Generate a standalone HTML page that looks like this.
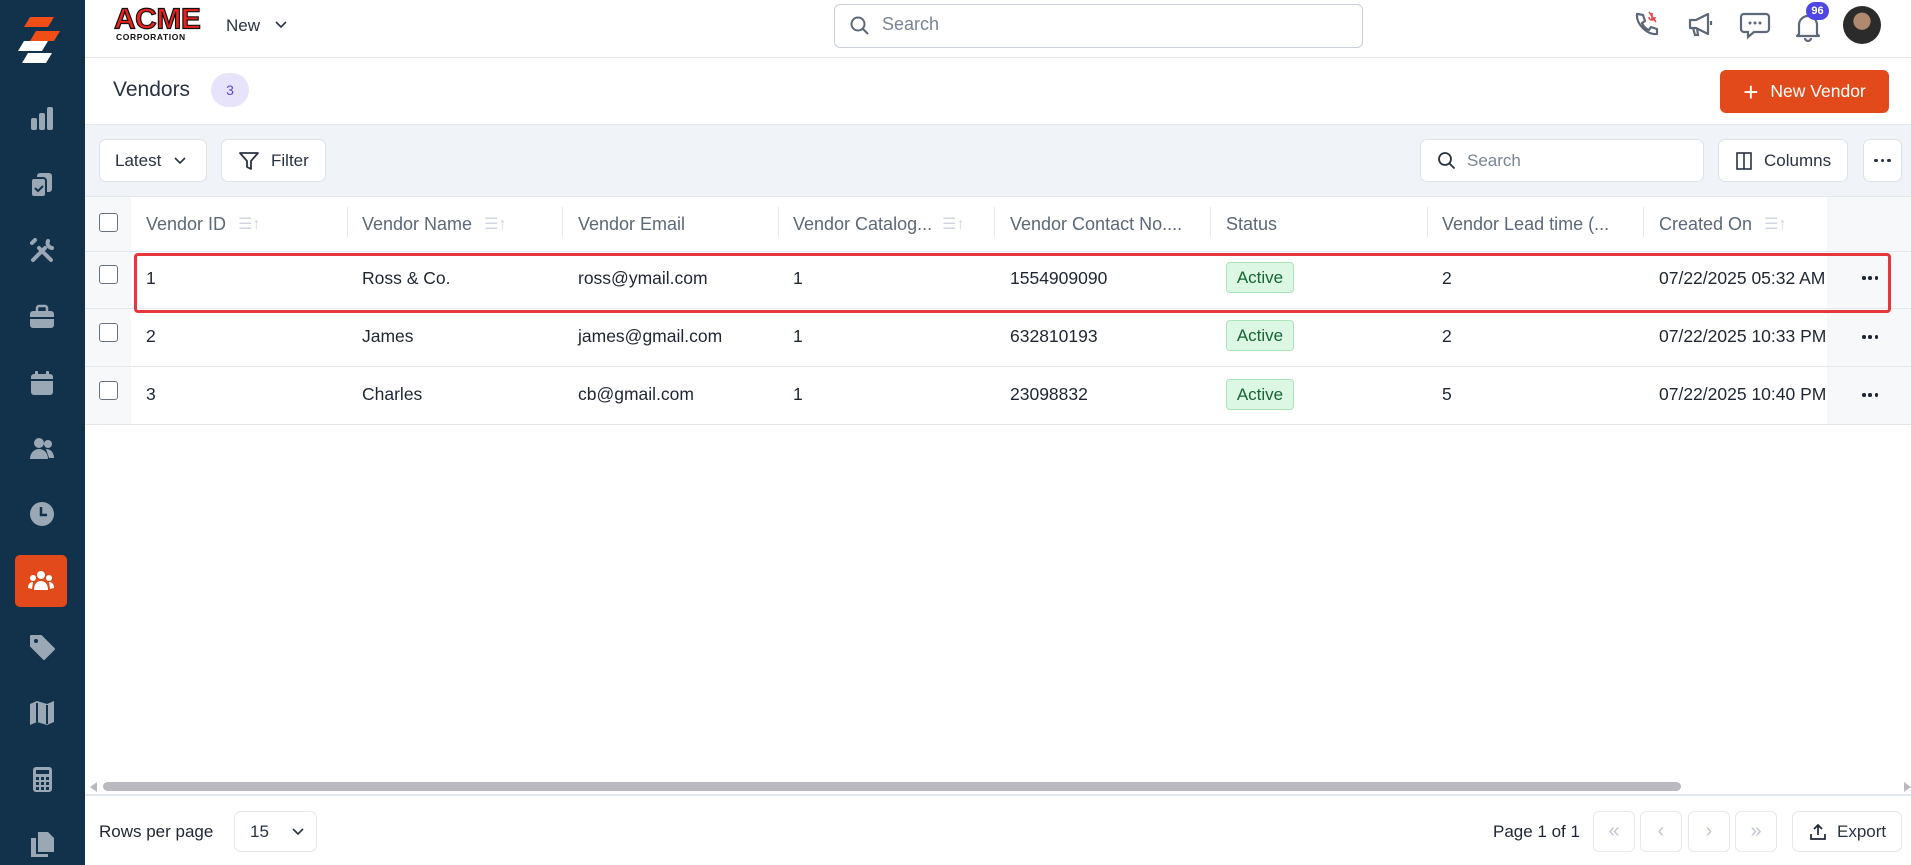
<!DOCTYPE html>
<html><head><meta charset="utf-8"><style>
*{box-sizing:border-box;margin:0;padding:0}
body{width:1911px;height:865px;overflow:hidden;font-family:"Liberation Sans",sans-serif;background:#fff;position:relative;color:#1f2633}
.abs{position:absolute}
.side{left:0;top:0;width:85px;height:865px;background:#12324b}
.si{position:absolute;left:28px;width:28px;height:28px}
.btn{position:absolute;background:#fff;border:1px solid #dde2ea;border-radius:7px;display:flex;align-items:center;font-size:17px;color:#2a3342}
.hd{position:absolute;top:197px;height:54px;display:flex;align-items:center;font-size:18px;color:#5d6878;white-space:nowrap}
.cell{position:absolute;font-size:17.5px;color:#1f2633;white-space:nowrap}
.cb{position:absolute;left:99px;width:19px;height:19px;border:1.5px solid #6b7280;border-radius:3px;background:#fff}
.act{position:absolute;left:1226px;width:68px;height:31px;background:#dcf7e3;border:1px solid #a9e3b8;border-radius:4px;color:#166534;font-size:17px;display:flex;align-items:center;justify-content:center}
.dots{position:absolute;left:1862px;width:16px;height:4px;display:flex;justify-content:space-between}
.dots i{width:3.5px;height:3.5px;border-radius:50%;background:#1f2633;display:block}
.pg{position:absolute;top:811px;width:42px;height:41px;border:1px solid #e6e9ef;border-radius:6px;color:#c0c7d2;display:flex;align-items:center;justify-content:center;font-size:20px}
</style></head><body>
<div class="abs side"></div>
<svg class="abs" style="left:16px;top:15px" width="50" height="50" viewBox="0 0 50 50"><polygon points="14,2 38,2 32,12 8,12" fill="#f04e16"/><polygon points="20,16 44,16 38,26 14,26" fill="#f04e16"/><polygon points="8,26 32,26 26,36 2,36" fill="#fff"/><polygon points="12,38 36,38 30,48 6,48" fill="#fff"/></svg>
<svg class="si" style="top:104px" viewBox="0 0 28 28" fill="#9aa8b5"><rect x="3" y="14" width="6" height="12" rx="2"/><rect x="11" y="9" width="6" height="17" rx="2"/><rect x="19" y="3" width="6" height="23" rx="2"/></svg>
<svg class="si" style="top:171px" viewBox="0 0 28 28" fill="#9aa8b5"><rect x="9" y="2" width="15" height="19" rx="3"/><rect x="3" y="7" width="15" height="19" rx="3" stroke="#12324b" stroke-width="2"/><path d="M7 17l3 3 5-5" stroke="#12324b" stroke-width="2" fill="none"/></svg>
<svg class="si" style="top:237px" viewBox="0 0 28 28" stroke="#9aa8b5" stroke-width="4" stroke-linecap="round"><path d="M5 23L17 11M11 11L23 23M20 4a5 5 0 0 0 4 7M4 6l3-3"/></svg>
<svg class="si" style="top:303px" viewBox="0 0 28 28" fill="#9aa8b5"><rect x="2" y="8" width="24" height="17" rx="3"/><rect x="9" y="3" width="10" height="7" rx="2" fill="none" stroke="#9aa8b5" stroke-width="2.5"/><rect x="2" y="14" width="24" height="2" fill="#12324b"/></svg>
<svg class="si" style="top:369px" viewBox="0 0 28 28" fill="#9aa8b5"><rect x="3" y="5" width="22" height="21" rx="3"/><rect x="7" y="2" width="3" height="6" rx="1"/><rect x="18" y="2" width="3" height="6" rx="1"/><rect x="3" y="10" width="22" height="2" fill="#12324b"/></svg>
<svg class="si" style="top:435px" viewBox="0 0 28 28" fill="#9aa8b5"><circle cx="11" cy="8" r="5"/><path d="M2 24c0-6 4-10 9-10s9 4 9 10z"/><circle cx="20" cy="9" r="4"/><path d="M18 14c5 0 8 4 8 9h-5z"/></svg>
<svg class="si" style="top:500px" viewBox="0 0 28 28"><circle cx="14" cy="14" r="12" fill="#9aa8b5"/><path d="M13 7v8h6" stroke="#12324b" stroke-width="2.5" fill="none"/></svg>
<div class="abs" style="left:15px;top:555px;width:52px;height:52px;background:#e34a1b;border-radius:5px"></div>
<svg class="si" style="top:568px;left:27px" viewBox="0 0 28 28" fill="#fff"><circle cx="14" cy="7" r="4"/><circle cx="6" cy="10" r="3"/><circle cx="22" cy="10" r="3"/><path d="M7 22c0-6 3-9 7-9s7 3 7 9z"/><path d="M1 20c0-4 2-6 5-6l-1 7z M27 20c0-4-2-6-5-6l1 7z"/></svg>
<svg class="si" style="top:633px" viewBox="0 0 28 28" fill="#9aa8b5"><path d="M3 3h10l13 13-10 10L3 13z" stroke="#9aa8b5" stroke-linejoin="round" stroke-width="2"/><circle cx="8" cy="8" r="2" fill="#12324b"/></svg>
<svg class="si" style="top:699px" viewBox="0 0 28 28" fill="#9aa8b5"><path d="M2 5l7-3 10 3 7-3v21l-7 3-10-3-7 3z"/><path d="M9 4v19M19 6v19" stroke="#12324b" stroke-width="2"/></svg>
<svg class="si" style="top:765px" viewBox="0 0 28 28" fill="#9aa8b5"><rect x="5" y="2" width="19" height="25" rx="3"/><rect x="8" y="5" width="13" height="4" fill="#12324b"/><g fill="#12324b"><rect x="8" y="12" width="3" height="3"/><rect x="13" y="12" width="3" height="3"/><rect x="18" y="12" width="3" height="3"/><rect x="8" y="17" width="3" height="3"/><rect x="13" y="17" width="3" height="3"/><rect x="18" y="17" width="3" height="3"/><rect x="8" y="22" width="3" height="3"/><rect x="13" y="22" width="3" height="3"/><rect x="18" y="22" width="3" height="3"/></g></svg>
<svg class="si" style="top:830px" viewBox="0 0 28 28" fill="#9aa8b5"><path d="M10 2h10l6 6v14H10z"/><path d="M3 8h5v16h12v3H3z"/></svg>

<!-- top bar -->
<div class="abs" style="left:114px;top:6px;font-family:'Liberation Sans';font-weight:900;font-size:30px;color:#e8231f;letter-spacing:-0.5px;line-height:28px;-webkit-text-stroke:1.2px #111;transform:scaleY(0.95)">ACME</div>
<div class="abs" style="left:116px;top:32px;font-size:8.5px;font-weight:bold;color:#111;letter-spacing:0.6px">CORPORATION</div>
<div class="abs" style="left:226px;top:16px;font-size:17px;color:#2a3342">New</div>
<svg class="abs" style="left:274px;top:20px" width="14" height="10" viewBox="0 0 14 10"><path d="M2 2l5 5 5-5" stroke="#2a3342" stroke-width="1.6" fill="none"/></svg>
<div class="abs" style="left:834px;top:4px;width:529px;height:44px;border:1px solid #c9d0da;border-radius:6px"></div>
<svg class="abs" style="left:849px;top:15px" width="22" height="22" viewBox="0 0 22 22"><circle cx="9" cy="9" r="6.5" stroke="#5d6878" stroke-width="2" fill="none"/><path d="M14 14l5 5" stroke="#5d6878" stroke-width="2"/></svg>
<div class="abs" style="left:882px;top:14px;font-size:18px;color:#7a8494">Search</div>
<div class="abs" style="left:85px;top:57px;width:1826px;height:1px;background:#e3e7ee"></div>
<svg class="abs" style="left:1632px;top:10px" width="30" height="30" viewBox="0 0 30 30"><path d="M6 4l5 1 2 6-3 2c1 3 4 6 7 7l2-3 6 2v5c-10 1-21-10-20-20z" stroke="#5d6878" stroke-width="2.2" fill="none" stroke-linejoin="round"/><path d="M20 3v7M17 7c0 4 6 4 6 0M17 2l7 10" stroke="#e34a4a" stroke-width="1.6" fill="none"/></svg>
<svg class="abs" style="left:1686px;top:11px" width="30" height="28" viewBox="0 0 30 28"><path d="M4 9h6l12-6v20L10 17H4z" stroke="#5d6878" stroke-width="2.2" fill="none" stroke-linejoin="round"/><path d="M7 17l2 7h3l-1-7M25 10v4" stroke="#5d6878" stroke-width="2.2" fill="none"/></svg>
<svg class="abs" style="left:1739px;top:11px" width="32" height="30" viewBox="0 0 32 30"><path d="M5 3h22a3 3 0 0 1 3 3v12a3 3 0 0 1-3 3H15l-6 5v-5H5a3 3 0 0 1-3-3V6a3 3 0 0 1 3-3z" stroke="#5d6878" stroke-width="2.2" fill="none"/><circle cx="11" cy="12" r="1.5" fill="#5d6878"/><circle cx="16" cy="12" r="1.5" fill="#5d6878"/><circle cx="21" cy="12" r="1.5" fill="#5d6878"/></svg>
<svg class="abs" style="left:1794px;top:12px" width="28" height="30" viewBox="0 0 28 30"><path d="M5 22V13a9 9 0 0 1 18 0v9l2 2H3z" stroke="#5d6878" stroke-width="2.2" fill="none" stroke-linejoin="round"/><path d="M11 26a3 3 0 0 0 6 0" stroke="#5d6878" stroke-width="2.2" fill="none"/></svg>
<div class="abs" style="left:1806px;top:2px;width:23px;height:18px;border-radius:9px;background:#4f46e5;color:#fff;font-size:11px;font-weight:bold;display:flex;align-items:center;justify-content:center">96</div>
<div class="abs" style="left:1843px;top:6px;width:38px;height:38px;border-radius:50%;background:radial-gradient(circle at 50% 40%,#b08a70 0 28%,#2b2b2b 30% 100%)"></div>

<!-- title row -->
<div class="abs" style="left:113px;top:78px;font-size:21px;color:#2a3342">Vendors</div>
<div class="abs" style="left:211px;top:73px;width:38px;height:34px;border-radius:17px;background:#e6e3fb;color:#5b45d6;font-size:14px;display:flex;align-items:center;justify-content:center">3</div>
<div class="abs" style="left:1720px;top:70px;width:169px;height:43px;background:#e34a1b;border-radius:6px;color:#fff;font-size:17.5px;display:flex;align-items:center;justify-content:center"><span style="font-size:26px;margin-right:12px;font-weight:300;line-height:20px">+</span>New Vendor</div>

<!-- toolbar -->
<div class="abs" style="left:85px;top:124px;width:1826px;height:73px;background:#f0f3f8;border-top:1px solid #e3e7ee;border-bottom:1px solid #e3e7ee"></div>
<div class="btn" style="left:99px;top:139px;width:108px;height:43px;padding-left:15px">Latest<svg style="margin-left:12px" width="14" height="10" viewBox="0 0 14 10"><path d="M2 2l5 5 5-5" stroke="#2a3342" stroke-width="1.6" fill="none"/></svg></div>
<div class="btn" style="left:221px;top:139px;width:105px;height:43px;padding-left:16px"><svg width="22" height="22" viewBox="0 0 22 22"><path d="M2 3h18l-7 8v8l-4-2v-6z" stroke="#2a3342" stroke-width="1.8" fill="none" stroke-linejoin="round"/></svg><span style="margin-left:11px">Filter</span></div>
<div class="btn" style="left:1420px;top:139px;width:284px;height:43px;padding-left:16px;color:#7a8494"><svg width="20" height="20" viewBox="0 0 20 20"><circle cx="8" cy="8" r="6" stroke="#2a3342" stroke-width="1.8" fill="none"/><path d="M12.5 12.5l5 5" stroke="#2a3342" stroke-width="1.8"/></svg><span style="margin-left:10px">Search</span></div>
<div class="btn" style="left:1718px;top:139px;width:130px;height:43px;padding-left:17px"><svg width="16" height="18" viewBox="0 0 16 18"><rect x="1" y="1" width="14" height="16" stroke="#2a3342" stroke-width="1.6" fill="none"/><path d="M8 1v16" stroke="#2a3342" stroke-width="1.6"/></svg><span style="margin-left:12px">Columns</span></div>
<div class="btn" style="left:1863px;top:139px;width:39px;height:43px;justify-content:center"><div style="display:flex;gap:3px"><i style="width:3.5px;height:3.5px;border-radius:50%;background:#2a3342"></i><i style="width:3.5px;height:3.5px;border-radius:50%;background:#2a3342"></i><i style="width:3.5px;height:3.5px;border-radius:50%;background:#2a3342"></i></div></div>

<!-- table header -->
<div class="abs" style="left:85px;top:197px;width:46px;height:227px;background:#f7f8fa"></div>
<div class="abs" style="left:1827px;top:197px;width:84px;height:227px;background:#f7f8fa"></div>
<div class="abs" style="left:131px;top:197px;width:1696px;height:54px;background:#fff"></div>
<div class="cb" style="top:213px"></div>
<div class="hd" style="left:146px">Vendor ID <span style="color:#cfd6e0;margin-left:12px;font-size:16px">☰↑</span></div>
<div class="hd" style="left:362px">Vendor Name <span style="color:#cfd6e0;margin-left:12px;font-size:16px">☰↑</span></div>
<div class="hd" style="left:578px">Vendor Email</div>
<div class="hd" style="left:793px">Vendor Catalog... <span style="color:#cfd6e0;margin-left:10px;font-size:16px">☰↑</span></div>
<div class="hd" style="left:1010px">Vendor Contact No....</div>
<div class="hd" style="left:1226px">Status</div>
<div class="hd" style="left:1442px">Vendor Lead time (...</div>
<div class="hd" style="left:1659px">Created On <span style="color:#cfd6e0;margin-left:12px;font-size:16px">☰↑</span></div>
<div class="abs" style="left:347px;top:207px;width:1px;height:30px;background:#e3e7ee"></div>
<div class="abs" style="left:562px;top:207px;width:1px;height:30px;background:#e3e7ee"></div>
<div class="abs" style="left:778px;top:207px;width:1px;height:30px;background:#e3e7ee"></div>
<div class="abs" style="left:994px;top:207px;width:1px;height:30px;background:#e3e7ee"></div>
<div class="abs" style="left:1210px;top:207px;width:1px;height:30px;background:#e3e7ee"></div>
<div class="abs" style="left:1427px;top:207px;width:1px;height:30px;background:#e3e7ee"></div>
<div class="abs" style="left:1643px;top:207px;width:1px;height:30px;background:#e3e7ee"></div>
<div class="abs" style="left:85px;top:251px;width:1826px;height:1px;background:#e3e7ee"></div>
<div class="abs" style="left:85px;top:308px;width:1826px;height:1px;background:#e3e7ee"></div>
<div class="abs" style="left:85px;top:366px;width:1826px;height:1px;background:#e3e7ee"></div>
<div class="abs" style="left:85px;top:424px;width:1826px;height:1px;background:#e3e7ee"></div>

<!-- rows -->
<div class="cb" style="top:265px"></div>
<div class="cell" style="left:146px;top:268px">1</div>
<div class="cell" style="left:362px;top:268px">Ross &amp; Co.</div>
<div class="cell" style="left:578px;top:268px">ross@ymail.com</div>
<div class="cell" style="left:793px;top:268px">1</div>
<div class="cell" style="left:1010px;top:268px">1554909090</div>
<div class="act" style="top:262px">Active</div>
<div class="cell" style="left:1442px;top:268px">2</div>
<div class="cell" style="left:1659px;top:268px;width:168px;overflow:hidden">07/22/2025 05:32 AM</div>
<div class="dots" style="top:276px"><i></i><i></i><i></i></div>

<div class="cb" style="top:323px"></div>
<div class="cell" style="left:146px;top:326px">2</div>
<div class="cell" style="left:362px;top:326px">James</div>
<div class="cell" style="left:578px;top:326px">james@gmail.com</div>
<div class="cell" style="left:793px;top:326px">1</div>
<div class="cell" style="left:1010px;top:326px">632810193</div>
<div class="act" style="top:320px">Active</div>
<div class="cell" style="left:1442px;top:326px">2</div>
<div class="cell" style="left:1659px;top:326px;width:168px;overflow:hidden">07/22/2025 10:33 PM</div>
<div class="dots" style="top:335px"><i></i><i></i><i></i></div>

<div class="cb" style="top:381px"></div>
<div class="cell" style="left:146px;top:384px">3</div>
<div class="cell" style="left:362px;top:384px">Charles</div>
<div class="cell" style="left:578px;top:384px">cb@gmail.com</div>
<div class="cell" style="left:793px;top:384px">1</div>
<div class="cell" style="left:1010px;top:384px">23098832</div>
<div class="act" style="top:379px">Active</div>
<div class="cell" style="left:1442px;top:384px">5</div>
<div class="cell" style="left:1659px;top:384px;width:168px;overflow:hidden">07/22/2025 10:40 PM</div>
<div class="dots" style="top:393px"><i></i><i></i><i></i></div>

<div class="abs" style="left:134px;top:253px;width:1757px;height:60px;border:3px solid #e5373c;border-radius:4px"></div>

<!-- scrollbar -->
<div class="abs" style="left:90px;top:782px;width:0;height:0;border-top:5px solid transparent;border-bottom:5px solid transparent;border-right:7px solid #b9b9bf"></div>
<div class="abs" style="left:103px;top:782px;width:1578px;height:9px;border-radius:5px;background:#b9b9bf"></div>
<div class="abs" style="left:1904px;top:782px;width:0;height:0;border-top:5px solid transparent;border-bottom:5px solid transparent;border-left:7px solid #b9b9bf"></div>
<div class="abs" style="left:85px;top:794px;width:1826px;height:2px;background:#e3e7ee"></div>

<!-- footer -->
<div class="abs" style="left:99px;top:822px;font-size:17px;color:#1f2633">Rows per page</div>
<div class="btn" style="left:234px;top:811px;width:83px;height:41px;padding-left:15px;border-color:#e3e7ee">15<svg style="margin-left:22px" width="14" height="10" viewBox="0 0 14 10"><path d="M2 2l5 5 5-5" stroke="#2a3342" stroke-width="1.6" fill="none"/></svg></div>
<div class="abs" style="left:1493px;top:822px;font-size:17px;color:#1f2633">Page 1 of 1</div>
<div class="pg" style="left:1593px">«</div>
<div class="pg" style="left:1640px">‹</div>
<div class="pg" style="left:1688px">›</div>
<div class="pg" style="left:1735px">»</div>
<div class="btn" style="left:1792px;top:811px;width:110px;height:41px;padding-left:16px;border-color:#e3e7ee"><svg width="18" height="18" viewBox="0 0 18 18"><path d="M9 12V2M5 6l4-4 4 4M2 11v5h14v-5" stroke="#1f2633" stroke-width="1.7" fill="none"/></svg><span style="margin-left:10px">Export</span></div>
</body></html>
